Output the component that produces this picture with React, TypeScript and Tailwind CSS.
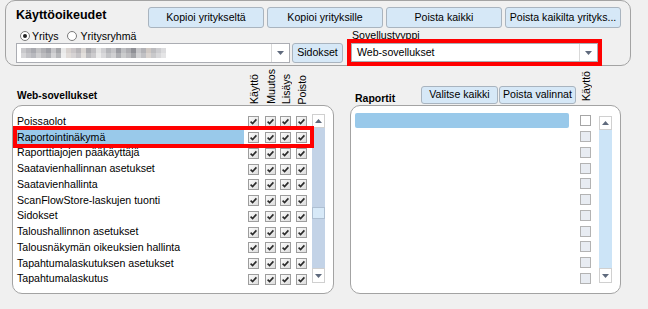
import React from 'react';

const ROWS = [
  'Poissaolot',
  'Raportointinäkymä',
  'Raporttiajojen pääkäyttäjä',
  'Saatavienhallinnan asetukset',
  'Saatavienhallinta',
  'ScanFlowStore-laskujen tuonti',
  'Sidokset',
  'Taloushallinnon asetukset',
  'Talousnäkymän oikeuksien hallinta',
  'Tapahtumalaskutuksen asetukset',
  'Tapahtumalaskutus',
];

const COLS = ['Käyttö', 'Muutos', 'Lisäys', 'Poisto'];
const COL_GAP = ['ml-[4px]', 'ml-[6px]', 'ml-[4px]', 'ml-[5px]'];

// pixelated (censored) company name
const BLUR: [string, string][] = [
  ['#c9c9cc', '#d6d6d8'], ['#b9b9bd', '#c4c4c8'], ['#a9aab0', '#b8b9be'], ['#c2c2c4', '#cfcfd1'],
  ['#b0b0b4', '#bdbdc0'], ['#9fa0a6', '#b1b2b6'], ['#c6c6c9', '#d3d3d5'], ['#a5a6aa', '#b6b7ba'],
  ['#e9e9e9', '#eeeeee'], ['#d8d2cf', '#e0dbd8'], ['#cac6c8', '#d6d3d4'], ['#b7b5b8', '#c5c3c6'],
  ['#d9d5d2', '#e2dfdc'], ['#a9a9ad', '#bbbbbe'], ['#c0bfc2', '#cccbcd'], ['#e4e4e4', '#ebebeb'],
  ['#cfcfd2', '#d9d9db'], ['#b4b5b9', '#c2c3c6'], ['#c4c4c7', '#d0d0d2'], ['#9b9ca2', '#aeafb3'],
  ['#bfc0c3', '#cbcccd'], ['#adadb1', '#bcbcbf'], ['#8f9096', '#a4a5a9'], ['#c7c7ca', '#d2d2d4'],
  ['#b3b3b7', '#c1c1c4'], ['#d0c9c4', '#dad4d0'], ['#bdbdc0', '#c9c9cb'], ['#cdcdd0', '#d8d8da'],
  ['#dcdcde', '#e5e5e6'],
];

const Arrow = ({ up = false }: { up?: boolean }) => (
  <svg width="7" height="4" viewBox="0 0 7 4" className="block">
    <polygon points={up ? '0,4 7,4 3.5,0' : '0,0 7,0 3.5,4'} fill="#5f6a7d" />
  </svg>
);

const Check = ({ kind }: { kind: 'on' | 'empty' | 'disabled' }) => (
  <div
    className={`w-[11px] h-[11px] shrink-0 border flex items-center justify-center ${
      kind === 'on'
        ? 'border-[#9d9d9d] bg-gradient-to-br from-[#fbfbfb] to-[#dedede]'
        : kind === 'empty'
          ? 'border-[#a6a6a6] bg-white'
          : 'border-[#b3b3b3] bg-[#e8ecf2]'
    }`}
  >
    {kind === 'on' && (
      <svg width="9" height="9" viewBox="0 0 9 9" className="block">
        <path d="M1.6 4.6 L3.6 6.6 L7.4 2.4" fill="none" stroke="#2b2b2b" strokeWidth="1.6" />
      </svg>
    )}
  </div>
);

const Scrollbar = ({ track, thumb }: { track: string; thumb?: boolean }) => (
  <div className={`w-[13px] h-full flex flex-col ${track}`}>
    <div className="h-[14px] bg-white border border-[#d0d0d0] flex items-center justify-center">
      <Arrow up />
    </div>
    <div className="flex-1 flex flex-col">
      {thumb && <div className="mt-[79px] h-[12px] bg-[#d7e9f8] border border-[#aebfd2]" />}
    </div>
    <div className="h-[15px] bg-white border border-[#d0d0d0] flex items-center justify-center">
      <Arrow />
    </div>
  </div>
);

const Btn = ({ label, className }: { label: string; className: string }) => (
  <div
    className={`${className} shrink-0 flex items-center justify-center bg-[#d6e8f7] border border-[#a9b4bf] rounded-[3px] text-[10.6px] whitespace-nowrap overflow-hidden`}
  >
    {label}
  </div>
);

const Combo = ({ children, className }: { children: React.ReactNode; className: string }) => (
  <div className={`${className} flex bg-white border border-[#abadb3]`}>
    <div className="flex-1 flex items-center overflow-hidden">{children}</div>
    <div className="w-[18px] border-l border-[#d9d9d9] flex items-center justify-center">
      <Arrow />
    </div>
  </div>
);

export default function App() {
  return (
    <div className="w-[648px] h-[309px] overflow-hidden bg-[#f0f0f0] text-black font-['Liberation_Sans',Arial,sans-serif]">
      {/* top panel */}
      <div className="ml-[5px] w-[626px] h-[66px] border border-[#a3a3a3] rounded-[10px]">
        <div className="flex pt-[6px] pl-[10px]">
          <div className="w-[132px] pt-[1px] text-[12.5px] font-bold leading-[14px]">Käyttöoikeudet</div>
          <div className="flex gap-[3px]">
            <Btn label="Kopioi yritykseltä" className="w-[116px] h-[21px]" />
            <Btn label="Kopioi yrityksille" className="w-[116px] h-[21px]" />
            <Btn label="Poista kaikki" className="w-[116px] h-[21px]" />
            <Btn label="Poista kaikilta yrityks..." className="w-[116px] h-[21px] px-[3px]" />
          </div>
        </div>
        <div className="flex pl-[10px]">
          <div className="flex flex-col">
            <div className="mt-[2px] h-[12px] flex items-center text-[10.6px] leading-[12px]">
              <div className="ml-[4px] w-[10px] h-[10px] rounded-full border border-[#7a7a7a] bg-white flex items-center justify-center">
                <div className="w-[4px] h-[4px] rounded-full bg-[#222]" />
              </div>
              <span className="ml-[2px]">Yritys</span>
              <div className="ml-[9px] w-[10px] h-[10px] rounded-full border border-[#7a7a7a] bg-white" />
              <span className="ml-[3px]">Yritysryhmä</span>
            </div>
            <div className="mt-[1px] flex">
              <Combo className="w-[274px] h-[20px]">
                <div className="ml-[4px] flex">
                  {BLUR.map(([a, b], i) => (
                    <div key={i} className="flex flex-col">
                      <div className="w-[5px] h-[5px]" style={{ background: a }} />
                      <div className="w-[5px] h-[5px]" style={{ background: b }} />
                    </div>
                  ))}
                </div>
              </Combo>
              <Btn label="Sidokset" className="ml-[2px] w-[51px] h-[20px]" />
            </div>
          </div>
          <div className="ml-[4px] flex flex-col">
            <div className="ml-[5px] mt-[1px] h-[10px] text-[10.6px] leading-[12px] overflow-visible whitespace-nowrap">
              Sovellustyyppi
            </div>
            <div className="w-[255px] h-[27px] border-[4px] border-[#ff0000] relative z-10">
              <Combo className="w-full h-full">
                <span className="ml-[5px] text-[10.6px]">Web-sovellukset</span>
              </Combo>
            </div>
          </div>
        </div>
      </div>

      {/* lower area */}
      <div className="flex">
        {/* web-sovellukset */}
        <div className="ml-[12px] w-[322px]">
          <div className="h-[39px] flex items-end pl-[5px]">
            <div className="w-[227px] pb-[3px] text-[10.2px] font-bold leading-[12px]">Web-sovellukset</div>
            {COLS.map((c, i) => (
              <div key={c} className={`${COL_GAP[i]} w-[11px] flex justify-center pb-[1px]`}>
                <span className="[writing-mode:vertical-rl] rotate-180 text-[10.6px] leading-[12px] whitespace-nowrap">
                  {c}
                </span>
              </div>
            ))}
          </div>
          <div className="relative h-[189px] bg-white border border-[#a3a3a3] rounded-[10px] flex">
            <div className="pt-[8px] pl-[4px] flex flex-col">
              {ROWS.map((r, i) => (
                <div key={r} className="h-[15.75px] flex items-center">
                  <div
                    className={`w-[227px] h-full flex items-center text-[10.6px] whitespace-nowrap ${
                      i === 1 ? 'bg-[#99c9ea]' : ''
                    }`}
                  >
                    {r}
                  </div>
                  {COLS.map((c, j) => (
                    <div key={c} className={COL_GAP[j]}>
                      <Check kind="on" />
                    </div>
                  ))}
                </div>
              ))}
            </div>
            <div className="ml-[5px] mt-[8px] h-[169px]">
              <Scrollbar track="bg-[#c3d3e7]" thumb />
            </div>
            {/* highlight annotation */}
            <div className="absolute left-0 top-[20px] w-[301px] h-[22px] border-[4px] border-[#ff0000]" />
          </div>
        </div>

        {/* raportit */}
        <div className="ml-[16px] w-[271px]">
          <div className="h-[39px] flex items-end pl-[5px]">
            <div className="w-[66px] pb-[1px] text-[10.5px] font-bold leading-[12px]">Raportit</div>
            <div className="flex gap-[1px] mb-[1px]">
              <Btn label="Valitse kaikki" className="w-[77px] h-[18px]" />
              <Btn label="Poista valinnat" className="w-[77px] h-[18px]" />
            </div>
            <div className="ml-[4px] w-[11px] flex justify-center pb-[4px]">
              <span className="[writing-mode:vertical-rl] rotate-180 text-[10.6px] leading-[12px] whitespace-nowrap">
                Käyttö
              </span>
            </div>
          </div>
          <div className="h-[189px] bg-white border border-[#a3a3a3] rounded-[10px] flex">
            <div className="pt-[7px] pl-[4px] flex flex-col">
              {ROWS.map((r, i) => (
                <div key={r} className="h-[15.75px] flex items-center">
                  <div className={`w-[214px] h-[15px] rounded-[2px] ${i === 0 ? 'bg-[#99c9ea]' : ''}`} />
                  <div className="ml-[11px]">
                    <Check kind={i === 0 ? 'empty' : 'disabled'} />
                  </div>
                </div>
              ))}
            </div>
            <div className="ml-[8px] mt-[10px] h-[167px]">
              <Scrollbar track="bg-[#cce4f7]" />
            </div>
          </div>
        </div>
      </div>
    </div>
  );
}
